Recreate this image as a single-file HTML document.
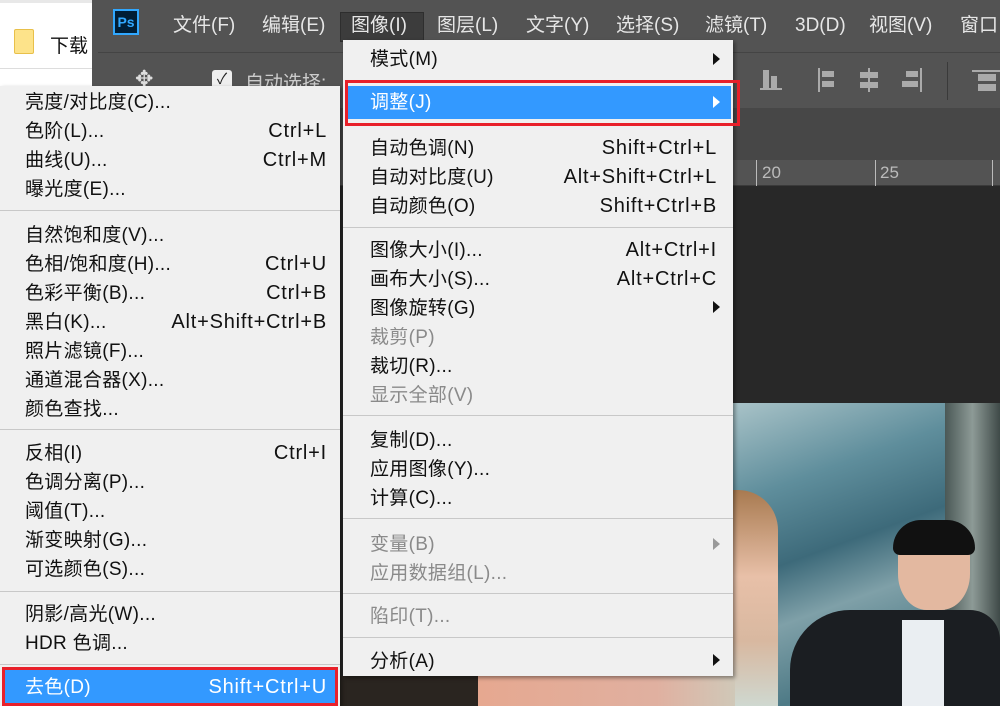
<!DOCTYPE html>
<html><head><meta charset="utf-8"><style>
*{margin:0;padding:0;box-sizing:border-box}
body{width:1000px;height:706px;overflow:hidden;position:relative;background:#282828;font-family:"Liberation Sans","Noto Sans CJK SC",sans-serif;font-size:19px}
.a{position:absolute}
.mi{position:absolute;color:#e6e6e6;top:13px;font-size:19px;line-height:26px;height:26px}
.menu{position:absolute;background:#f0f0f0;box-shadow:2px 2px 4px rgba(0,0,0,.4)}
.it{position:absolute;left:0;right:0;height:29px;line-height:29px;color:#111}
.it .l{position:absolute;letter-spacing:0.3px}
.it .r{position:absolute;font-size:20px;letter-spacing:0.8px}
.g{color:#8a8a8a}
.sep{position:absolute;height:1px;background:#c8c8c8}
.arr{position:absolute;width:0;height:0;border-top:6px solid transparent;border-bottom:6px solid transparent;border-left:7px solid #111}
</style></head><body>
<div class="a" style="left:0;top:0;width:92px;height:90px;background:#fff"></div>
<div class="a" style="left:0;top:0;width:92px;height:3px;background:#e8e8e8"></div>
<div class="a" style="left:0;top:68px;width:92px;height:1px;background:#ddd"></div>
<div class="a" style="left:14px;top:29px;width:20px;height:25px;background:#fde38a;border:1px solid #e8c04a;border-radius:2px"></div>
<div class="a" style="left:50px;top:31px;color:#111">下载</div>
<div class="a" style="left:92px;top:0;width:908px;height:52px;background:#535353"></div>
<div class="a" style="left:92px;top:52px;width:908px;height:56px;background:#535353"></div>
<div class="a" style="left:98px;top:52px;width:902px;height:1px;background:#444"></div>
<div class="a" style="left:92px;top:108px;width:908px;height:52px;background:#474747"></div>
<div class="a" style="left:92px;top:160px;width:908px;height:26px;background:#535353;border-bottom:1px solid #3a3a3a"></div>
<div class="a" style="left:762px;top:163px;color:#bbb;font-size:17px">20</div>
<div class="a" style="left:880px;top:163px;color:#bbb;font-size:17px">25</div>
<div class="a" style="left:756px;top:160px;width:1px;height:26px;background:#bbb"></div>
<div class="a" style="left:875px;top:160px;width:1px;height:26px;background:#bbb"></div>
<div class="a" style="left:992px;top:160px;width:1px;height:26px;background:#bbb"></div>
<div class="a" style="left:113px;top:9px;width:26px;height:26px;border:2px solid #31a8ff;background:#001e36;color:#31a8ff;font-size:14px;font-weight:bold;line-height:22px;text-align:center">Ps</div>
<div class="a" style="left:340px;top:12px;width:84px;height:30px;background:#3c3c3c;border:1px solid #2e2e2e"></div>
<div class="mi" style="left:173px">文件(F)</div>
<div class="mi" style="left:262px">编辑(E)</div>
<div class="mi" style="left:351px">图像(I)</div>
<div class="mi" style="left:437px">图层(L)</div>
<div class="mi" style="left:526px">文字(Y)</div>
<div class="mi" style="left:616px">选择(S)</div>
<div class="mi" style="left:705px">滤镜(T)</div>
<div class="mi" style="left:795px">3D(D)</div>
<div class="mi" style="left:869px">视图(V)</div>
<div class="mi" style="left:960px">窗口</div>
<div class="a" style="left:212px;top:70px;width:20px;height:20px;background:#eee;border-radius:3px;color:#222;font-size:15px;line-height:20px;text-align:center">✓</div>
<div class="a" style="left:245px;top:68px;color:#ccc">自动选择:</div>
<div class="a" style="left:135px;top:66px;color:#ddd;font-size:22px">✥</div>
<div class="a" style="left:760px;top:70px;width:22px;height:20px;border-bottom:2px solid #aaa"><div class="a" style="left:3px;top:0;width:6px;height:18px;background:#aaa"></div><div class="a" style="left:11px;top:6px;width:6px;height:12px;background:#aaa"></div></div>
<div class="a" style="left:818px;top:68px;width:2px;height:24px;background:#aaa"></div><div class="a" style="left:822px;top:71px;width:12px;height:6px;background:#aaa"></div><div class="a" style="left:822px;top:81px;width:12px;height:6px;background:#aaa"></div>
<div class="a" style="left:868px;top:68px;width:2px;height:24px;background:#aaa"></div><div class="a" style="left:860px;top:72px;width:18px;height:6px;background:#aaa"></div><div class="a" style="left:860px;top:82px;width:18px;height:6px;background:#aaa"></div>
<div class="a" style="left:920px;top:68px;width:2px;height:24px;background:#aaa"></div><div class="a" style="left:906px;top:71px;width:12px;height:6px;background:#aaa"></div><div class="a" style="left:902px;top:81px;width:16px;height:6px;background:#aaa"></div>
<div class="a" style="left:947px;top:62px;width:1px;height:38px;background:#3a3a3a"></div>
<div class="a" style="left:972px;top:70px;width:28px;height:2px;background:#aaa"></div><div class="a" style="left:978px;top:74px;width:18px;height:7px;background:#aaa"></div><div class="a" style="left:978px;top:84px;width:18px;height:7px;background:#aaa"></div>
<div class="a" style="left:733px;top:403px;width:267px;height:303px;background:linear-gradient(160deg,#a9c3c8 0%,#5f8e9c 25%,#3d6a7a 45%,#7fa0a8 60%,#4e7a86 80%,#9fb5b5 100%)"></div>
<div class="a" style="left:945px;top:403px;width:55px;height:260px;background:linear-gradient(90deg,#4a5856,#8d9a96,#3f4a48)"></div>
<div class="a" style="left:733px;top:490px;width:45px;height:216px;background:linear-gradient(180deg,#a87a50 0%,#e8c0a8 40%,#d8b8a0 70%,#cfd8d0 100%);border-radius:0 40px 0 0"></div>
<div class="a" style="left:790px;top:610px;width:210px;height:96px;background:#1b1e22;border-radius:60px 30px 0 0"></div>
<div class="a" style="left:898px;top:520px;width:72px;height:90px;background:#e3b8a0;border-radius:40%"></div>
<div class="a" style="left:893px;top:520px;width:82px;height:35px;background:#111;border-radius:40px 40px 10px 10px"></div>
<div class="a" style="left:902px;top:620px;width:42px;height:86px;background:#eaeef2"></div>
<div class="a" style="left:340px;top:676px;width:395px;height:30px;background:linear-gradient(90deg,#2a2520 0,#2a2520 35%,#e6a890 35%,#e0b0a0 80%,#d0c8b8)"></div>
<div class="menu" style="left:0;top:86px;width:340px;height:620px">
<div class="it" style="top:2px"><span class="l" style="left:25px">亮度/对比度(C)...</span></div>
<div class="it" style="top:31px"><span class="l" style="left:25px">色阶(L)...</span><span class="r" style="right:13px">Ctrl+L</span></div>
<div class="it" style="top:60px"><span class="l" style="left:25px">曲线(U)...</span><span class="r" style="right:13px">Ctrl+M</span></div>
<div class="it" style="top:89px"><span class="l" style="left:25px">曝光度(E)...</span></div>
<div class="sep" style="top:124px;left:0;right:0"></div>
<div class="it" style="top:135px"><span class="l" style="left:25px">自然饱和度(V)...</span></div>
<div class="it" style="top:164px"><span class="l" style="left:25px">色相/饱和度(H)...</span><span class="r" style="right:13px">Ctrl+U</span></div>
<div class="it" style="top:193px"><span class="l" style="left:25px">色彩平衡(B)...</span><span class="r" style="right:13px">Ctrl+B</span></div>
<div class="it" style="top:222px"><span class="l" style="left:25px">黑白(K)...</span><span class="r" style="right:13px">Alt+Shift+Ctrl+B</span></div>
<div class="it" style="top:251px"><span class="l" style="left:25px">照片滤镜(F)...</span></div>
<div class="it" style="top:280px"><span class="l" style="left:25px">通道混合器(X)...</span></div>
<div class="it" style="top:309px"><span class="l" style="left:25px">颜色查找...</span></div>
<div class="sep" style="top:343px;left:0;right:0"></div>
<div class="it" style="top:353px"><span class="l" style="left:25px">反相(I)</span><span class="r" style="right:13px">Ctrl+I</span></div>
<div class="it" style="top:382px"><span class="l" style="left:25px">色调分离(P)...</span></div>
<div class="it" style="top:411px"><span class="l" style="left:25px">阈值(T)...</span></div>
<div class="it" style="top:440px"><span class="l" style="left:25px">渐变映射(G)...</span></div>
<div class="it" style="top:469px"><span class="l" style="left:25px">可选颜色(S)...</span></div>
<div class="sep" style="top:505px;left:0;right:0"></div>
<div class="it" style="top:514px"><span class="l" style="left:25px">阴影/高光(W)...</span></div>
<div class="it" style="top:543px"><span class="l" style="left:25px">HDR 色调...</span></div>
<div class="sep" style="top:578px;left:0;right:0"></div>
<div class="a" style="left:2px;top:581px;width:336px;height:39px;border:3px solid #e8202a;background:#3399ff"></div>
<div class="it" style="top:587px;color:#fff"><span class="l" style="left:25px">去色(D)</span><span class="r" style="right:13px">Shift+Ctrl+U</span></div>
</div>
<div class="menu" style="left:343px;top:40px;width:390px;height:636px">
<div class="it" style="top:5px"><span class="l" style="left:27px">模式(M)</span></div>
<div class="arr" style="left:370px;top:13px"></div>
<div class="a" style="left:2px;top:40px;width:395px;height:46px;border:3px solid #e8202a"></div>
<div class="a" style="left:5px;top:46px;width:383px;height:33px;background:#3399ff"></div>
<div class="it" style="top:48px;color:#fff"><span class="l" style="left:27px">调整(J)</span></div>
<div class="arr" style="left:370px;top:56px;border-left-color:#fff"></div>
<div class="it" style="top:94px"><span class="l" style="left:27px">自动色调(N)</span><span class="r" style="right:16px">Shift+Ctrl+L</span></div>
<div class="it" style="top:123px"><span class="l" style="left:27px">自动对比度(U)</span><span class="r" style="right:16px">Alt+Shift+Ctrl+L</span></div>
<div class="it" style="top:152px"><span class="l" style="left:27px">自动颜色(O)</span><span class="r" style="right:16px">Shift+Ctrl+B</span></div>
<div class="sep" style="top:187px;left:0;right:0"></div>
<div class="it" style="top:196px"><span class="l" style="left:27px">图像大小(I)...</span><span class="r" style="right:16px">Alt+Ctrl+I</span></div>
<div class="it" style="top:225px"><span class="l" style="left:27px">画布大小(S)...</span><span class="r" style="right:16px">Alt+Ctrl+C</span></div>
<div class="it" style="top:254px"><span class="l" style="left:27px">图像旋转(G)</span></div>
<div class="arr" style="left:370px;top:261px"></div>
<div class="it g" style="top:283px"><span class="l" style="left:27px">裁剪(P)</span></div>
<div class="it" style="top:312px"><span class="l" style="left:27px">裁切(R)...</span></div>
<div class="it g" style="top:341px"><span class="l" style="left:27px">显示全部(V)</span></div>
<div class="sep" style="top:375px;left:0;right:0"></div>
<div class="it" style="top:386px"><span class="l" style="left:27px">复制(D)...</span></div>
<div class="it" style="top:415px"><span class="l" style="left:27px">应用图像(Y)...</span></div>
<div class="it" style="top:444px"><span class="l" style="left:27px">计算(C)...</span></div>
<div class="sep" style="top:478px;left:0;right:0"></div>
<div class="it g" style="top:490px"><span class="l" style="left:27px">变量(B)</span></div>
<div class="arr" style="left:370px;top:498px;border-left-color:#999"></div>
<div class="it g" style="top:519px"><span class="l" style="left:27px">应用数据组(L)...</span></div>
<div class="sep" style="top:553px;left:0;right:0"></div>
<div class="it g" style="top:562px"><span class="l" style="left:27px">陷印(T)...</span></div>
<div class="sep" style="top:597px;left:0;right:0"></div>
<div class="it" style="top:607px"><span class="l" style="left:27px">分析(A)</span></div>
<div class="arr" style="left:370px;top:614px"></div>
</div>
</body></html>
